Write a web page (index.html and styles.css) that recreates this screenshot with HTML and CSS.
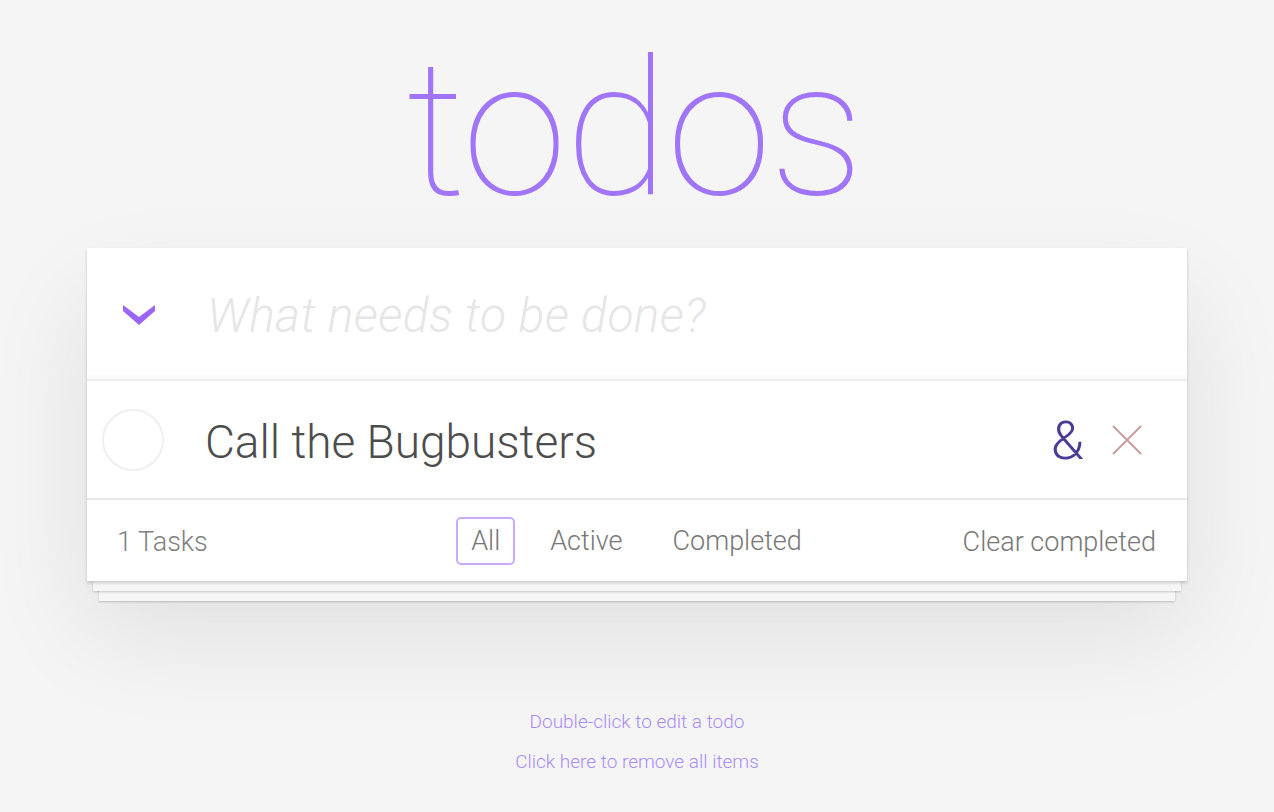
FILE: index.html
```html
<!DOCTYPE html>
<html lang="en">
<head>
<meta charset="utf-8">
<title>todos</title>
<link rel="stylesheet" href="styles.css">
</head>
<body>
<main class="app">
  <h1 class="title">todos</h1>
  <section class="card">
    <div class="new-row">
      <span class="toggle-all">
        <svg width="32" height="21" viewBox="0 0 32 21"><polygon points="0,0 16,12 32,0 32,6 16,20 0,6" fill="#9966f7"/></svg>
      </span>
      <span class="placeholder">What needs to be done?</span>
    </div>
    <ul class="list">
      <li class="item">
        <span class="check"></span>
        <span class="label">Call the Bugbusters</span>
        <span class="amp">&amp;</span>
        <span class="destroy">
          <svg width="30" height="30" viewBox="0 0 30 30"><path d="M1 1 L29 29 M29 1 L1 29" stroke="#cc9d9d" stroke-width="2" fill="none"/></svg>
        </span>
      </li>
    </ul>
    <footer class="footer">
      <span class="count">1 Tasks</span>
      <ul class="filters">
        <li><a class="filter selected">All</a></li>
        <li><a class="filter">Active</a></li>
        <li><a class="filter">Completed</a></li>
      </ul>
      <span class="clear">Clear completed</span>
    </footer>
  </section>
  <div class="info">
    <p>Double-click to edit a todo</p>
    <p>Click here to remove all items</p>
  </div>
</main>
</body>
</html>
```

FILE: styles.css
```css
* { box-sizing: border-box; }
html, body { margin: 0; padding: 0; }
body {
  background: #f5f5f5;
  font-family: Roboto, "Helvetica Neue", "Liberation Sans", sans-serif;
  font-weight: 300;
  color: #4d4d4d;
  height: 812px;
  overflow: hidden;
}
.app {
  width: 1100px;
  margin: 0 auto;
  display: flex;
  flex-direction: column;
}
.title {
  margin: 0;
  height: 248px;
  padding-top: 23px;
  text-align: center;
  font-weight: 100;
  font-size: 190px;
  line-height: 212px;
  color: #a075f7;
  letter-spacing: -2px;
  padding-right: 6px;
}
.card {
  position: relative;
  background: #fff;
  box-shadow:
    0 2px 3px rgba(0,0,0,0.18),
    0 16px 0 -6px #f6f6f6,
    0 17px 2px -6px rgba(0,0,0,0.2),
    0 32px 0 -12px #f6f6f6,
    0 33px 2px -12px rgba(0,0,0,0.2),
    0 50px 100px rgba(0,0,0,0.09);
}
.new-row {
  height: 133px;
  display: flex;
  align-items: center;
  border-bottom: 2px solid #ececec;
  box-shadow: inset 0 -4px 2px rgba(0,0,0,0.02);
}
.toggle-all {
  width: 120px;
  display: flex;
  justify-content: center;
  padding-right: 16px;
  padding-top: 4px;
}
.placeholder {
  font-style: italic;
  font-size: 48px;
  color: #e6e6e6;
  letter-spacing: 0.4px;
  padding-top: 4px;
}
.list { list-style: none; margin: 0; padding: 0; }
.item {
  height: 119px;
  display: flex;
  align-items: center;
  border-bottom: 2px solid #e8e8e8;
}
.check {
  width: 62px;
  height: 62px;
  margin-left: 15px;
  margin-right: 43px;
  border: 2px solid #efefef;
  border-radius: 50%;
}
.label {
  flex: 1;
  font-size: 46px;
  color: #4d4d4d;
  padding-top: 4px;
  margin-left: -2px;
}
.amp {
  font-size: 54px;
  color: #4b3a96;
  margin-right: 28px;
  padding-top: 2px;
}
.destroy {
  width: 30px;
  height: 30px;
  margin-right: 45px;
  display: flex;
}
.footer {
  height: 81px;
  display: flex;
  align-items: center;
  justify-content: space-between;
  padding: 0 31px 0 30px;
  font-size: 27px;
  color: #777;
}
.count { width: 340px; color: #808080; padding-top: 2px; }
.filters {
  list-style: none;
  margin: 0;
  padding: 0;
  display: flex;
  gap: 20px;
}
.filter {
  display: block;
  padding: 6px 13px;
  border: 2px solid transparent;
  border-radius: 5px;
  color: #777;
}
.filter.selected { border-color: #c8abfd; }
.clear { width: 340px; text-align: right; color: #777; padding-top: 2px; }
.info {
  margin-top: 129px;
  text-align: center;
  font-size: 19px;
  color: #a88cf8;
}
.info p { margin: 0 0 17px; line-height: 23px; }
```
